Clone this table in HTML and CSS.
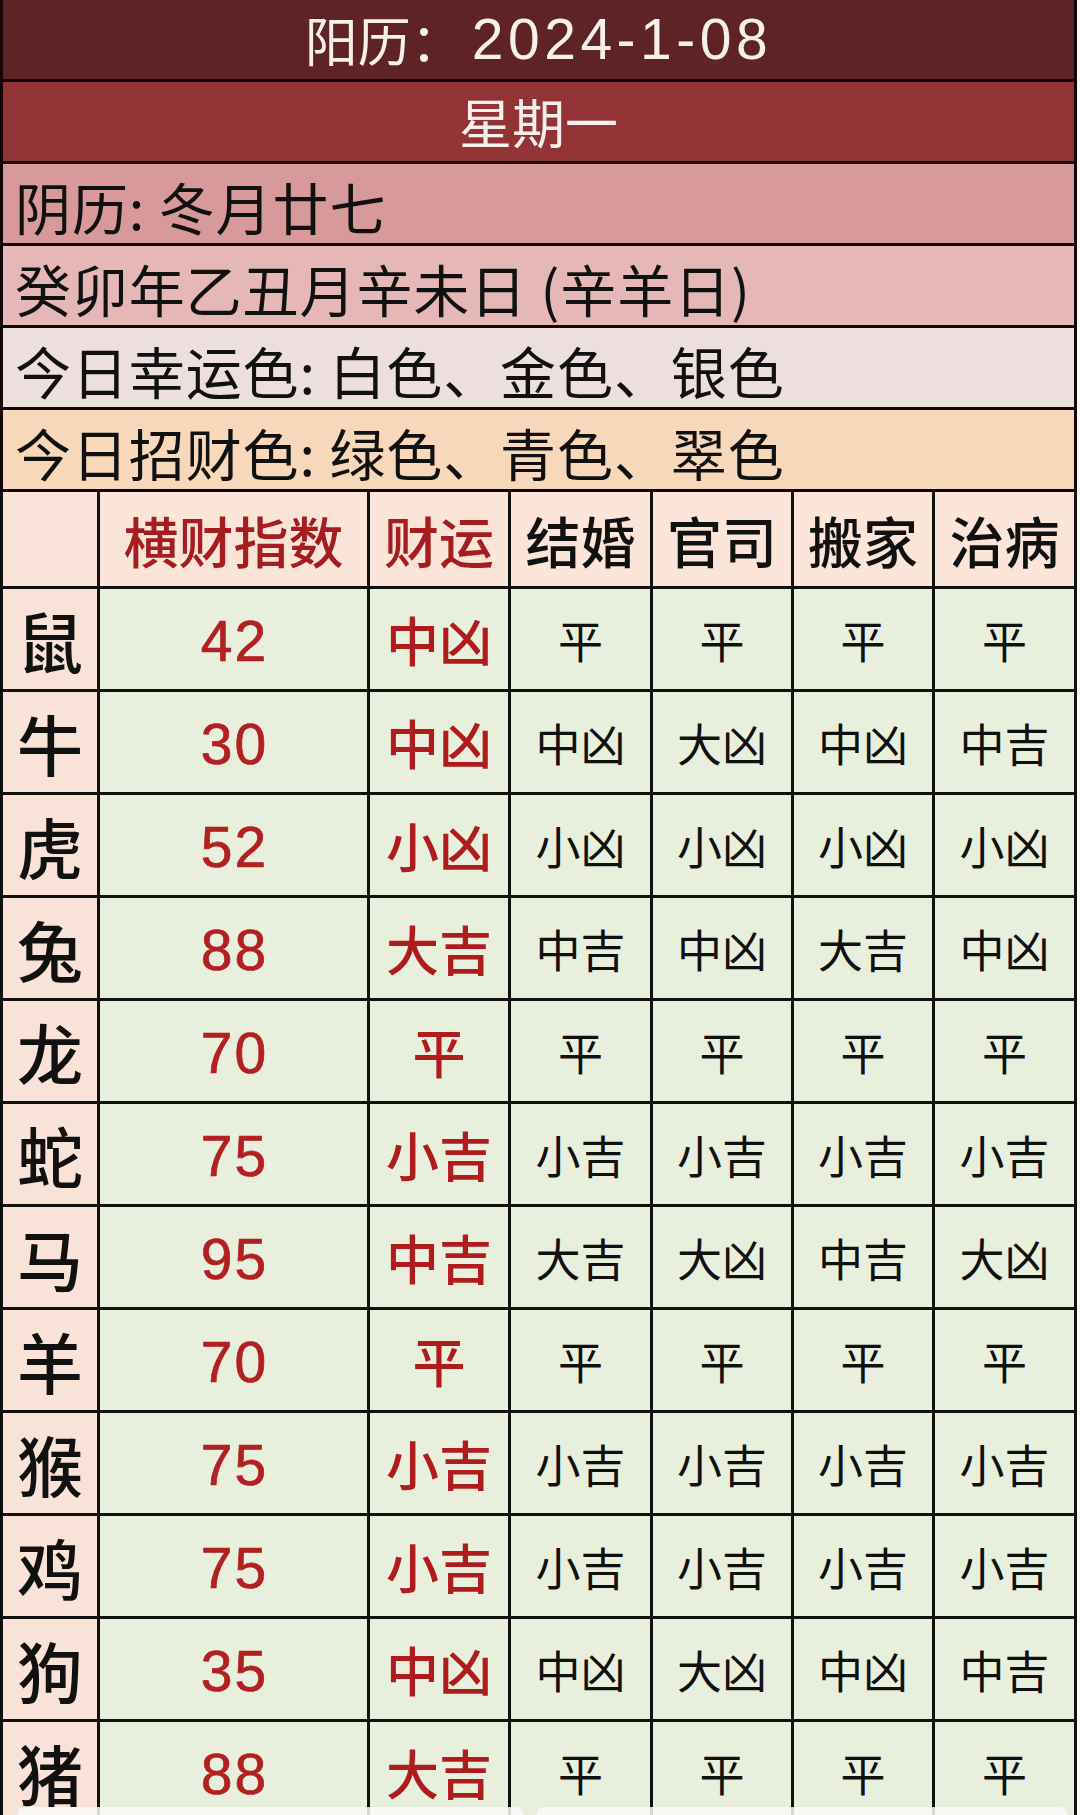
FILE: index.html
```html
<!DOCTYPE html>
<html lang="zh-CN">
<head>
<meta charset="utf-8">
<title>阳历 2024-1-08</title>
<link rel="stylesheet" href="styles.css">
</head>
<body>
<div class="sheet">
  <div class="info">
    <div class="row r-solar">阳历：<span class="date">2024-1-08</span></div>
    <div class="row r-week">星期一</div>
    <div class="row r-lunar">阴历: 冬月廿七</div>
    <div class="row r-ganzhi">癸卯年乙丑月辛未日 (辛羊日)</div>
    <div class="row r-lucky">今日幸运色: 白色、金色、银色</div>
    <div class="row r-wealth">今日招财色: 绿色、青色、翠色</div>
  </div>
  <div class="grid">
    <div class="c head zod"></div>
    <div class="c head red">横财指数</div>
    <div class="c head red">财运</div>
    <div class="c head">结婚</div>
    <div class="c head">官司</div>
    <div class="c head">搬家</div>
    <div class="c head">治病</div>

    <div class="c zod">鼠</div><div class="c num">42</div><div class="c luck">中凶</div><div class="c v">平</div><div class="c v">平</div><div class="c v">平</div><div class="c v">平</div>
    <div class="c zod">牛</div><div class="c num">30</div><div class="c luck">中凶</div><div class="c v">中凶</div><div class="c v">大凶</div><div class="c v">中凶</div><div class="c v">中吉</div>
    <div class="c zod">虎</div><div class="c num">52</div><div class="c luck">小凶</div><div class="c v">小凶</div><div class="c v">小凶</div><div class="c v">小凶</div><div class="c v">小凶</div>
    <div class="c zod">兔</div><div class="c num">88</div><div class="c luck">大吉</div><div class="c v">中吉</div><div class="c v">中凶</div><div class="c v">大吉</div><div class="c v">中凶</div>
    <div class="c zod">龙</div><div class="c num">70</div><div class="c luck">平</div><div class="c v">平</div><div class="c v">平</div><div class="c v">平</div><div class="c v">平</div>
    <div class="c zod">蛇</div><div class="c num">75</div><div class="c luck">小吉</div><div class="c v">小吉</div><div class="c v">小吉</div><div class="c v">小吉</div><div class="c v">小吉</div>
    <div class="c zod">马</div><div class="c num">95</div><div class="c luck">中吉</div><div class="c v">大吉</div><div class="c v">大凶</div><div class="c v">中吉</div><div class="c v">大凶</div>
    <div class="c zod">羊</div><div class="c num">70</div><div class="c luck">平</div><div class="c v">平</div><div class="c v">平</div><div class="c v">平</div><div class="c v">平</div>
    <div class="c zod">猴</div><div class="c num">75</div><div class="c luck">小吉</div><div class="c v">小吉</div><div class="c v">小吉</div><div class="c v">小吉</div><div class="c v">小吉</div>
    <div class="c zod">鸡</div><div class="c num">75</div><div class="c luck">小吉</div><div class="c v">小吉</div><div class="c v">小吉</div><div class="c v">小吉</div><div class="c v">小吉</div>
    <div class="c zod">狗</div><div class="c num">35</div><div class="c luck">中凶</div><div class="c v">中凶</div><div class="c v">大凶</div><div class="c v">中凶</div><div class="c v">中吉</div>
    <div class="c zod">猪</div><div class="c num">88</div><div class="c luck">大吉</div><div class="c v">平</div><div class="c v">平</div><div class="c v">平</div><div class="c v">平</div>
  </div>
</div>
<div class="bottom-bar"><span class="pill p1"></span><span class="pill p2"></span></div>
</body>
</html>
```
FILE: styles.css
```css
html, body {
  margin: 0;
  padding: 0;
  background: #fbfbf8;
}
body {
  width: 1080px;
  height: 1815px;
  overflow: hidden;
  font-family: "Noto Sans CJK SC", "Noto Sans", sans-serif;
  color: #111;
}
.sheet {
  width: 1077px;
}
.info {
  display: flex;
  flex-direction: column;
}
.row {
  box-sizing: border-box;
  height: 82px;
  border-left: 3px solid #140606;
  border-right: 3px solid #140606;
  border-bottom: 3px solid #140606;
  display: flex;
  align-items: center;
  font-size: 56px;
  line-height: 1;
  letter-spacing: 0.9px;
  padding-left: 12px;
  padding-top: 4px;
  white-space: nowrap;
}
.r-solar {
  background: #5e2325;
  color: #f7efec;
  justify-content: center;
  padding-left: 0;
  font-size: 53px;
  letter-spacing: 0;
  padding-top: 0;
}
.r-solar .date {
  font-family: "Liberation Sans", "Noto Sans", sans-serif;
  font-size: 57px;
  letter-spacing: 4.5px;
  margin-left: 8px;
}
.r-week {
  background: #923435;
  color: #f7efec;
  justify-content: center;
  padding-left: 0;
  font-size: 53px;
  letter-spacing: 0;
  padding-top: 0;
}
.r-lunar { background: #d8999a; }
.r-ganzhi { background: #e5b7b7; }
.r-lucky { background: #eedfdf; }
.r-wealth { background: #f8d8ba; }

.grid {
  display: grid;
  grid-template-columns: 97px 270px 141px 142px 141px 141px 142px;
  grid-template-rows: 97px;
  grid-auto-rows: 103px;
  border-left: 3px solid #111;
}
.c {
  box-sizing: border-box;
  border-right: 3px solid #111;
  border-bottom: 3px solid #111;
  background: #e9efdd;
  display: flex;
  align-items: center;
  justify-content: center;
  line-height: 1;
  white-space: nowrap;
}
.head {
  background: #fbe5d9;
  font-size: 55px;
  color: #111;
  font-weight: 500;
}
.head.red { color: #a51d1f; }
.zod {
  background: #f9e3d8;
  font-size: 66px;
  font-weight: 500;
}
.num {
  color: #b32022;
  font-family: "Liberation Sans", "Noto Sans", sans-serif;
  font-size: 57px;
  letter-spacing: 2px;
  padding-left: 2px;
  padding-top: 5px;
  -webkit-text-stroke: 0.7px #b32022;
}
.luck {
  color: #b01c1e;
  font-size: 53px;
  font-weight: 500;
}
.v {
  font-size: 45px;
  color: #111;
}
.bottom-bar {
  position: fixed;
  left: 0;
  bottom: 0;
  width: 1080px;
  height: 8px;
  display: flex;
  gap: 14px;
  padding-left: 18px;
  box-sizing: border-box;
}
.pill {
  display: block;
  height: 8px;
  background: rgba(250, 250, 248, 0.85);
  border-radius: 6px 6px 0 0;
}
.p1 { width: 505px; }
.p2 { width: 530px; }
```
